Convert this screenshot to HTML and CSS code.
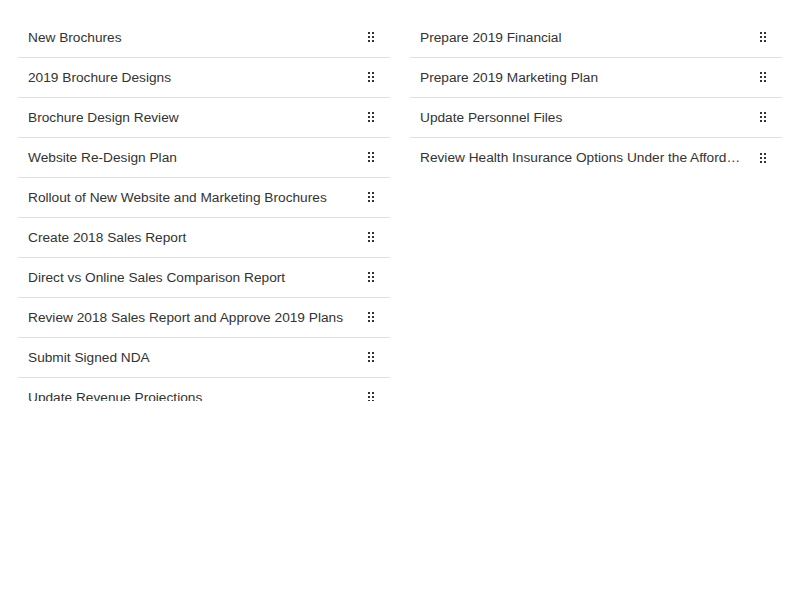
FILE: index.html
```html
<!DOCTYPE html>
<html>
<head>
<meta charset="utf-8">
<link rel="stylesheet" href="styles.css">
</head>
<body>
<div class="board">
  <ul class="list list-left">
    <li class="item"><span class="label">New Brochures</span><span class="handle"></span></li>
    <li class="item"><span class="label">2019 Brochure Designs</span><span class="handle"></span></li>
    <li class="item"><span class="label">Brochure Design Review</span><span class="handle"></span></li>
    <li class="item"><span class="label">Website Re-Design Plan</span><span class="handle"></span></li>
    <li class="item"><span class="label">Rollout of New Website and Marketing Brochures</span><span class="handle"></span></li>
    <li class="item"><span class="label">Create 2018 Sales Report</span><span class="handle"></span></li>
    <li class="item"><span class="label">Direct vs Online Sales Comparison Report</span><span class="handle"></span></li>
    <li class="item"><span class="label">Review 2018 Sales Report and Approve 2019 Plans</span><span class="handle"></span></li>
    <li class="item"><span class="label">Submit Signed NDA</span><span class="handle"></span></li>
    <li class="item"><span class="label">Update Revenue Projections</span><span class="handle"></span></li>
    <li class="item"><span class="label">Review Revenue Projections</span><span class="handle"></span></li>
  </ul>
  <ul class="list">
    <li class="item"><span class="label">Prepare 2019 Financial</span><span class="handle"></span></li>
    <li class="item"><span class="label">Prepare 2019 Marketing Plan</span><span class="handle"></span></li>
    <li class="item"><span class="label">Update Personnel Files</span><span class="handle"></span></li>
    <li class="item"><span class="label">Review Health Insurance Options Under the Affordable Care Act</span><span class="handle"></span></li>
  </ul>
</div>
</body>
</html>
```
FILE: styles.css
```css
html, body {
  margin: 0;
  padding: 0;
  background: #fff;
}
body {
  font-family: "Liberation Sans", Arial, sans-serif;
  font-size: 13.7px;
  color: #333;
}
.board {
  display: grid;
  grid-template-columns: 372px 372px;
  column-gap: 20px;
  padding: 18px 18px;
  align-items: start;
}
.list {
  list-style: none;
  margin: 0;
  padding: 0;
}
.list-left {
  height: 383px;
  overflow: hidden;
}
.item {
  display: flex;
  align-items: center;
  height: 40px;
  box-sizing: border-box;
  padding: 0 16px 1px 10px;
  border-bottom: 1px solid #e0e0e0;
}
.item:last-child {
  border-bottom: none;
}
.label {
  flex: 1;
  min-width: 0;
  white-space: nowrap;
  overflow: hidden;
  text-overflow: ellipsis;
  padding-right: 16px;
}
.handle {
  width: 6px;
  height: 10px;
  flex: none;
  background:
    linear-gradient(#333, #333) 0 0 / 2px 2px no-repeat,
    linear-gradient(#333, #333) 4px 0 / 2px 2px no-repeat,
    linear-gradient(#333, #333) 0 4px / 2px 2px no-repeat,
    linear-gradient(#333, #333) 4px 4px / 2px 2px no-repeat,
    linear-gradient(#333, #333) 0 8px / 2px 2px no-repeat,
    linear-gradient(#333, #333) 4px 8px / 2px 2px no-repeat;
}
```
